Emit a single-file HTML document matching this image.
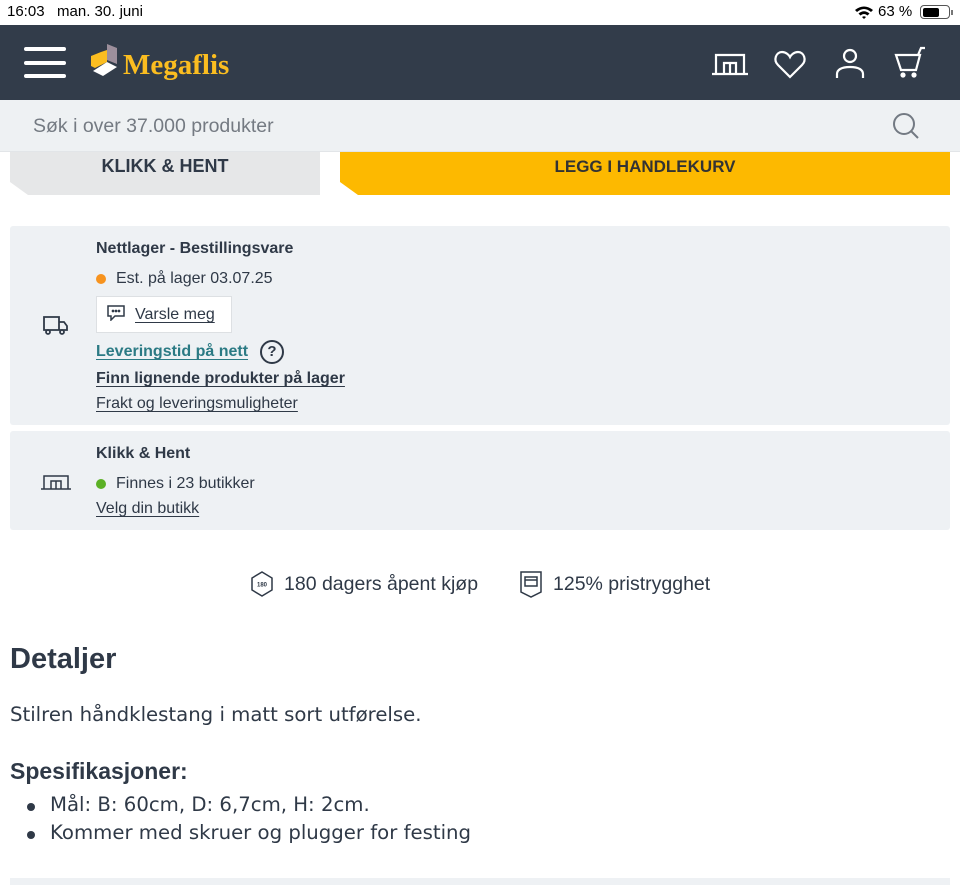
<!DOCTYPE html>
<html><head><meta charset="utf-8"><style>
*{margin:0;padding:0;box-sizing:border-box}
body{width:960px;height:885px;overflow:hidden;background:#fff;font-family:"Liberation Sans","DejaVu Sans",sans-serif;color:#2f3947;position:relative}
.a{position:absolute;white-space:nowrap}
.u{text-decoration:underline;text-underline-offset:3px}
.d{font-family:"DejaVu Sans",sans-serif;font-size:19.7px}
</style></head><body>
<div class="a" style="left:7px;top:3px;font-size:15px;color:#000">16:03&nbsp;&nbsp;&nbsp;man. 30. juni</div>
<svg class="a" style="left:854px;top:5px" width="20" height="14" viewBox="0 0 20 14"><path d="M1 5 Q10 -2 19 5 L17 7 Q10 1 3 7Z M4.5 8.5 Q10 4 15.5 8.5 L13.5 10.5 Q10 7.5 6.5 10.5Z M8 12 Q10 10.5 12 12 L10 14Z" fill="#000"/></svg>
<div class="a" style="left:878px;top:3px;font-size:15px;color:#000">63 %</div>
<div class="a" style="left:920px;top:5px;width:30px;height:14px;border:1.5px solid #555;border-radius:4px;padding:1.5px"><div style="width:16px;height:100%;background:#000;border-radius:2px"></div></div>
<div class="a" style="left:951px;top:10px;width:2px;height:5px;background:#777"></div>

<div class="a" style="left:0;top:25px;width:960px;height:75px;background:#323c4a"></div>
<div class="a" style="left:24px;top:47px;width:42px;height:4px;background:#fff;border-radius:2px"></div>
<div class="a" style="left:24px;top:61px;width:42px;height:4px;background:#fff;border-radius:2px"></div>
<div class="a" style="left:24px;top:74px;width:42px;height:4px;background:#fff;border-radius:2px"></div>
<svg class="a" style="left:89px;top:44px" width="30" height="36" viewBox="0 0 30 36"><path d="M18 0 L28 4 L28 20 L18 16Z" fill="#9d8f9c"/><path d="M12 8 L18 6 L18 18 L6 24 L2 22 L2 12Z" fill="#fbbd20"/><path d="M4 27 L18 18 L28 23 L14 32Z" fill="#fff"/></svg>
<div class="a" style="left:123px;top:49px;font-family:'Liberation Serif',serif;font-weight:bold;font-size:29px;color:#fbbd20">Megaflis</div>
<svg class="a" style="left:710px;top:46px" width="244" height="34" viewBox="0 0 244 34" fill="none" stroke="#fff" stroke-width="2.2">
<path d="M2 28 H38 M6 28 V9 H34 V28 M14 28 V17 H26 V28 M20 17 V28"/>
<path d="M80 31 L68 19 C63 14 66 6 72 6 C76 6 79 9 80 11 C81 9 84 6 88 6 C94 6 97 14 92 19Z"/>
<circle cx="140" cy="10" r="6"/><path d="M127 32 V28 C127 24 131 21 140 21 C149 21 153 24 153 28 V32"/>
<path d="M186 9 H210 L206 24 H191 Z M208 9 L211 2 H215"/><circle cx="193" cy="29" r="1.5" fill="#fff"/><circle cx="204" cy="29" r="1.5" fill="#fff"/>
</svg>

<div class="a" style="left:0;top:100px;width:960px;height:52px;background:#eef1f3;border-bottom:1px solid #e2e5e8"></div>
<div class="a" style="left:33px;top:115px;font-size:19.5px;color:#747a82">Søk i over 37.000 produkter</div>
<svg class="a" style="left:892px;top:112px" width="28" height="28" viewBox="0 0 28 28" fill="none" stroke="#737a83" stroke-width="2"><circle cx="12" cy="12" r="10"/><path d="M19 19 L26 26"/></svg>

<div class="a" style="left:10px;top:152px;width:310px;height:43px;background:#e6e7e8;clip-path:polygon(0 0,100% 0,100% 100%,18px 100%,0 30px)"></div>
<div class="a" style="left:10px;top:156px;width:310px;text-align:center;font-weight:bold;font-size:18px">KLIKK &amp; HENT</div>
<div class="a" style="left:340px;top:152px;width:610px;height:43px;background:#fdb900;clip-path:polygon(0 0,100% 0,100% 100%,18px 100%,0 30px)"></div>
<div class="a" style="left:340px;top:157px;width:610px;text-align:center;font-weight:bold;font-size:17px;color:#333">LEGG I HANDLEKURV</div>

<div class="a" style="left:10px;top:226px;width:940px;height:199px;background:#eef1f4;border-radius:3px"></div>
<svg class="a" style="left:42px;top:315px" width="28" height="22" viewBox="0 0 28 22" fill="none" stroke="#2f3947" stroke-width="1.8"><path d="M2 2 H17 V15 H2Z M17 7 H22 L25 11 V15 H17"/><circle cx="6" cy="17" r="2" fill="#eef1f4"/><circle cx="20" cy="17" r="2" fill="#eef1f4"/></svg>
<div class="a" style="left:96px;top:240px;font-size:16px;font-weight:bold">Nettlager - Bestillingsvare</div>
<div class="a" style="left:96px;top:274px;width:10px;height:10px;border-radius:50%;background:#f7931e"></div>
<div class="a" style="left:116px;top:270px;font-size:16px">Est. på lager 03.07.25</div>
<div class="a" style="left:96px;top:296px;width:136px;height:37px;background:#fff;border:1px solid #dde0e3"></div>
<svg class="a" style="left:107px;top:305px" width="18" height="16" viewBox="0 0 18 16" fill="none" stroke="#2f3947" stroke-width="1.5"><path d="M1 1 H17 V11 H8 L4 15 V11 H1Z"/><circle cx="6" cy="6" r=".6" fill="#2f3947"/><circle cx="9" cy="6" r=".6" fill="#2f3947"/><circle cx="12" cy="6" r=".6" fill="#2f3947"/></svg>
<div class="a u" style="left:135px;top:306px;font-size:16px">Varsle meg</div>
<div class="a u" style="left:96px;top:343px;font-size:16px;font-weight:bold;color:#2b7a84">Leveringstid på nett</div>
<div class="a" style="left:260px;top:340px;width:24px;height:24px;border:2px solid #2f3947;border-radius:50%;text-align:center;font-weight:bold;font-size:15px;line-height:20px">?</div>
<div class="a u" style="left:96px;top:370px;font-size:16px;font-weight:bold">Finn lignende produkter på lager</div>
<div class="a u" style="left:96px;top:395px;font-size:16px">Frakt og leveringsmuligheter</div>

<div class="a" style="left:10px;top:431px;width:940px;height:99px;background:#eef1f4;border-radius:3px"></div>
<svg class="a" style="left:40px;top:472px" width="32" height="20" viewBox="0 0 32 20" fill="none" stroke="#2f3947" stroke-width="1.5"><path d="M1 17 H31 M4 17 V4 H28 V17 M11 17 V9 H21 V17 M16 9 V17"/></svg>
<div class="a" style="left:96px;top:445px;font-size:16px;font-weight:bold">Klikk &amp; Hent</div>
<div class="a" style="left:96px;top:479px;width:10px;height:10px;border-radius:50%;background:#5bb025"></div>
<div class="a" style="left:116px;top:475px;font-size:16px">Finnes i 23 butikker</div>
<div class="a u" style="left:96px;top:500px;font-size:16px">Velg din butikk</div>

<svg class="a" style="left:250px;top:571px" width="24" height="26" viewBox="0 0 24 26" fill="none" stroke="#2f3947" stroke-width="1.5"><path d="M12 1 L22 7 V19 L12 25 L2 19 V7Z"/><text x="12" y="15.5" font-size="6" font-weight="bold" text-anchor="middle" fill="#2f3947" stroke="none" font-family="Liberation Sans">180</text></svg>
<div class="a" style="left:284px;top:573px;font-size:19.5px">180 dagers åpent kjøp</div>
<svg class="a" style="left:519px;top:570px" width="24" height="28" viewBox="0 0 24 28" fill="none" stroke="#2f3947" stroke-width="1.5"><path d="M2 2 H22 V22 L12 27 L2 22Z M6 7 H18 V16 H6Z M6 10 H18"/></svg>
<div class="a" style="left:553px;top:573px;font-size:19.5px">125% pristrygghet</div>

<div class="a" style="left:10px;top:643px;font-size:29px;font-weight:bold">Detaljer</div>
<div class="a d" style="left:10px;top:703px">Stilren håndklestang i matt sort utførelse.</div>
<div class="a" style="left:10px;top:758px;font-size:23px;font-weight:bold">Spesifikasjoner:</div>
<div class="a" style="left:27px;top:803px;width:8px;height:8px;border-radius:50%;background:#2f3947"></div>
<div class="a d" style="left:50px;top:793px">Mål: B: 60cm, D: 6,7cm, H: 2cm.</div>
<div class="a" style="left:27px;top:831px;width:8px;height:8px;border-radius:50%;background:#2f3947"></div>
<div class="a d" style="left:50px;top:821px">Kommer med skruer og plugger for festing</div>
<div class="a" style="left:10px;top:878px;width:940px;height:7px;background:#eef1f4"></div>
</body></html>
